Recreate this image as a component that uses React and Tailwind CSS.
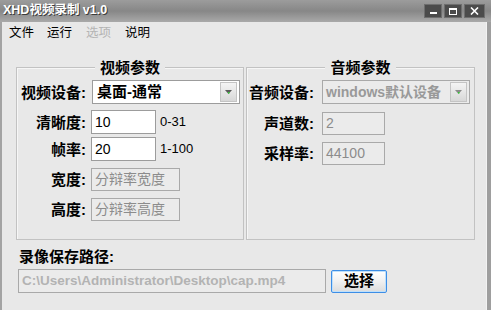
import React from "react";

const LABEL = "font-bold text-[15px] text-black leading-none whitespace-nowrap";

const ComboArrow = ({ disabled }) => (
  <div className="w-[17px] h-[20px] mr-[2px] border border-[#c4c4c4] bg-gradient-to-b from-[#f4f4f4] to-[#d8d8d8] flex items-center justify-center">
    <svg width="9" height="7" viewBox="0 0 9 7">
      <path d="M1 1 L8 1 L4.5 5 Z" fill={disabled ? "#8a8a8a" : "#5a5a5a"} />
      <rect x="4" y="3" width="1.5" height="1.5" fill="#2fcf2f" />
    </svg>
  </div>
);

const Row = ({ label, labelW, children, className = "" }) => (
  <div className={`flex items-center ${className}`}>
    <div className={`${LABEL} text-right`} style={{ width: labelW }}>
      {label}
    </div>
    {children}
  </div>
);

const GroupBox = ({ title, className, children }) => (
  <div className={`relative border border-[#c2c2c2] shadow-[inset_1px_1px_0_#f6f6f6] ${className}`}>
    <div className="absolute -top-[9px] left-0 right-0 flex justify-center">
      <span className="bg-[#e8e8e8] px-[5px] font-bold text-[15px] leading-[17px] text-black">{title}</span>
    </div>
    {children}
  </div>
);

const TextBox = ({ value, w, disabled, h = "h-[24px]" }) => (
  <div
    className={`${h} ${w} flex items-center px-[3px] text-[14px] border ${
      disabled ? "bg-[#ebebeb] border-[#a9a9a9] text-[#8c8c8c]" : "bg-white border-[#9c9c9c] text-black"
    }`}
  >
    {value}
  </div>
);

export default function App() {
  return (
    <div className="w-[491px] h-[310px] overflow-hidden bg-[#e8e8e8] flex flex-col font-['Liberation_Sans','Noto_Sans_CJK_SC',sans-serif]">
      {/* title bar */}
      <div className="h-[22px] flex items-start bg-gradient-to-b from-[#9c9c9c] via-[#878787] to-[#a9a9a9]">
        <div className="ml-[3px] mt-[3px] text-white font-bold text-[12.5px] leading-[15px] [text-shadow:1px_1px_0_#3c3c3c]">XHD视频录制 v1.0</div>
        <div className="ml-auto mr-[6px] mt-[4px] flex gap-[2px]">
          <div className="w-[18px] h-[14px] bg-[#4b4b4b] border border-[#6e6e6e] flex items-end justify-center pb-[3px]">
            <div className="w-[7px] h-[2px] bg-white" />
          </div>
          <div className="w-[18px] h-[14px] bg-[#4b4b4b] border border-[#6e6e6e] flex items-center justify-center">
            <div className="w-[8px] h-[7px] border border-white border-t-2" />
          </div>
          <div className="w-[21px] h-[14px] bg-[#4b4b4b] border border-[#6e6e6e] flex items-center justify-center">
            <svg width="9" height="8" viewBox="0 0 9 8">
              <path d="M1 0.5 L8 7.5 M8 0.5 L1 7.5" stroke="white" strokeWidth="1.6" />
            </svg>
          </div>
        </div>
      </div>

      <div className="flex-1 flex">
        <div className="w-[2px] bg-[#a3a3a3]" />
        <div className="flex-1 flex flex-col">
          {/* menu */}
          <div className="h-[22px] flex items-center pl-[7px] text-[12.5px] text-black">
            <span>文件</span>
            <span className="ml-[13px]">运行</span>
            <span className="ml-[14px] text-[#b4b4b4]">选项</span>
            <span className="ml-[14px]">说明</span>
          </div>

          {/* groups */}
          <div className="mt-[23px] ml-[14px] flex gap-[2px]">
            <GroupBox title="视频参数" className="w-[228px] h-[173px] pt-[12px]">
              <Row label="视频设备:" labelW={69}>
                <div className="ml-[6px] w-[148px] h-[24px] bg-white border border-[#9c9c9c] flex items-center">
                  <span className="flex-1 pl-[4px] font-bold text-[15px] text-black">桌面-通常</span>
                  <ComboArrow />
                </div>
              </Row>
              <Row label="清晰度:" labelW={69} className="mt-[6px]">
                <div className="ml-[5px]">
                  <TextBox value="10" w="w-[65px]" />
                </div>
                <span className="ml-[4px] text-[13px]">0-31</span>
              </Row>
              <Row label="帧率:" labelW={69} className="mt-[3px]">
                <div className="ml-[5px]">
                  <TextBox value="20" w="w-[65px]" />
                </div>
                <span className="ml-[4px] text-[13px]">1-100</span>
              </Row>
              <Row label="宽度:" labelW={69} className="mt-[7px]">
                <div className="ml-[5px]">
                  <TextBox value="分辩率宽度" w="w-[89px]" h="h-[23px]" disabled />
                </div>
              </Row>
              <Row label="高度:" labelW={69} className="mt-[7px]">
                <div className="ml-[5px]">
                  <TextBox value="分辩率高度" w="w-[89px]" h="h-[23px]" disabled />
                </div>
              </Row>
            </GroupBox>

            <GroupBox title="音频参数" className="w-[229px] h-[173px] pt-[12px]">
              <Row label="音频设备:" labelW={67}>
                <div className="ml-[8px] w-[148px] h-[24px] bg-[#ebebeb] border border-[#a9a9a9] flex items-center">
                  <span className="flex-1 pl-[3px] font-bold text-[14px] text-[#999999] whitespace-nowrap">windows默认设备</span>
                  <ComboArrow disabled />
                </div>
              </Row>
              <Row label="声道数:" labelW={67} className="mt-[8px]">
                <div className="ml-[8px]">
                  <TextBox value="2" w="w-[63px]" h="h-[23px]" disabled />
                </div>
              </Row>
              <Row label="采样率:" labelW={67} className="mt-[7px]">
                <div className="ml-[8px]">
                  <TextBox value="44100" w="w-[63px]" h="h-[23px]" disabled />
                </div>
              </Row>
            </GroupBox>
          </div>

          {/* save path */}
          <div className="ml-[17px] mt-[8px] font-bold text-[15px] leading-[18px] text-black">录像保存路径:</div>
          <div className="ml-[16px] mt-[3px] flex items-center gap-[5px]">
            <div className="w-[308px] h-[24px] bg-[#ebebeb] border border-[#a9a9a9] flex items-center px-[3px] text-[13.5px] font-bold text-[#b3b3b3]">
              C:\Users\Administrator\Desktop\cap.mp4
            </div>
            <button className="w-[56px] h-[23px] border border-[#3d8ee6] rounded-[2px] bg-gradient-to-b from-[#ffffff] via-[#f0f0f0] to-[#dcdcdc] shadow-[inset_0_0_0_1px_#bfe0fb] font-bold text-[15px] text-black flex items-center justify-center">
              选择
            </button>
          </div>
        </div>
        <div className="w-[1px] bg-[#f2f2f2]" />
        <div className="w-[4px] bg-[#9e9e9e]" />
      </div>
    </div>
  );
}
